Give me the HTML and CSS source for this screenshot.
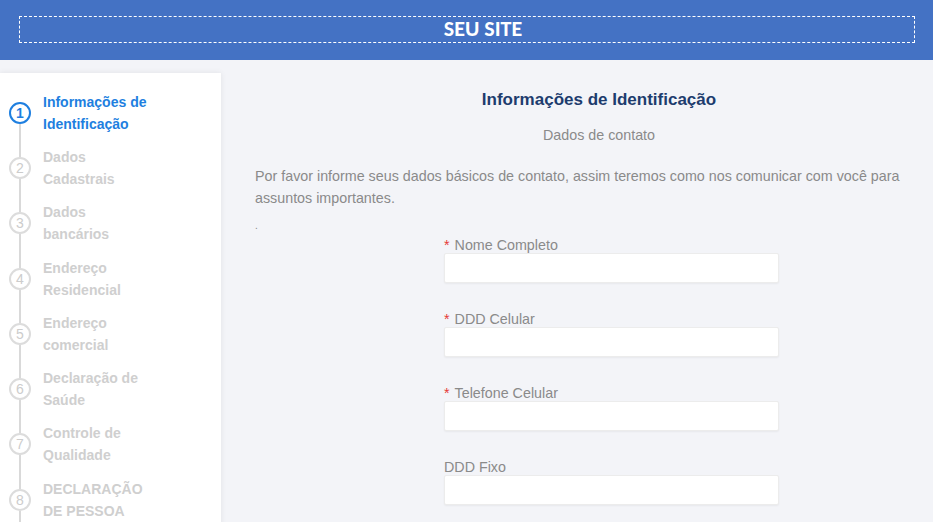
FILE: index.html
```html
<html>

<head>
    <title>Informações de Identificação</title>
    <link rel="stylesheet" href="styles.css">
</head>

<body>
    <div class="topo">
        <div class="topo-caixa">SEU SITE</div>
    </div>

    <div class="pagina">
        <!-- passos do cadastro -->
        <div class="lateral">
            <div class="passo ativo">
                <div class="marcador"><span class="traco oculto"></span><span class="bola">1</span><span class="traco"></span></div>
                <div class="passo-nome">Informações de Identificação</div>
            </div>
            <div class="passo">
                <div class="marcador"><span class="traco"></span><span class="bola">2</span><span class="traco"></span></div>
                <div class="passo-nome">Dados<br>Cadastrais</div>
            </div>
            <div class="passo">
                <div class="marcador"><span class="traco"></span><span class="bola">3</span><span class="traco"></span></div>
                <div class="passo-nome">Dados<br>bancários</div>
            </div>
            <div class="passo">
                <div class="marcador"><span class="traco"></span><span class="bola">4</span><span class="traco"></span></div>
                <div class="passo-nome">Endereço<br>Residencial</div>
            </div>
            <div class="passo">
                <div class="marcador"><span class="traco"></span><span class="bola">5</span><span class="traco"></span></div>
                <div class="passo-nome">Endereço<br>comercial</div>
            </div>
            <div class="passo">
                <div class="marcador"><span class="traco"></span><span class="bola">6</span><span class="traco"></span></div>
                <div class="passo-nome">Declaração de Saúde</div>
            </div>
            <div class="passo">
                <div class="marcador"><span class="traco"></span><span class="bola">7</span><span class="traco"></span></div>
                <div class="passo-nome">Controle de Qualidade</div>
            </div>
            <div class="passo">
                <div class="marcador"><span class="traco"></span><span class="bola">8</span><span class="traco"></span></div>
                <div class="passo-nome">DECLARAÇÃO DE PESSOA</div>
            </div>
        </div>

        <!-- formulario -->
        <div class="conteudo">
            <h1 class="titulo">Informações de Identificação</h1>
            <p class="subtitulo">Dados de contato</p>
            <p class="texto">Por favor informe seus dados básicos de contato, assim teremos como nos comunicar com você para assuntos importantes.</p>
            <p class="ponto">.</p>

            <div class="campos">
                <div class="campo">
                    <label><span class="obrigatorio">*</span>Nome Completo</label>
                    <input type="text">
                </div>
                <div class="campo">
                    <label><span class="obrigatorio">*</span>DDD Celular</label>
                    <input type="text">
                </div>
                <div class="campo">
                    <label><span class="obrigatorio">*</span>Telefone Celular</label>
                    <input type="text">
                </div>
                <div class="campo">
                    <label>DDD Fixo</label>
                    <input type="text">
                </div>
            </div>
        </div>
    </div>
</body>

</html>
```

FILE: styles.css
```css
* {
    box-sizing: border-box;
    margin: 0;
    padding: 0;
}

body {
    background-color: #f3f4f8;
    font-family: 'Liberation Sans', Arial, sans-serif;
    overflow: hidden;
    height: 100vh;
}

/* faixa azul do topo */
.topo {
    background-color: #4472c4;
    height: 60px;
    padding: 16px 18px 17px 19px;
}

.topo-caixa {
    height: 27px;
    border: 1.5px dashed #ffffff;
    padding-left: 32px;
    color: #ffffff;
    text-align: center;
    font-family: 'Carlito', 'Liberation Sans Narrow', 'Open Sans', sans-serif;
    font-size: 22px;
    font-weight: 700;
    line-height: 24px;
}

.pagina {
    display: flex;
    align-items: flex-start;
}

/* passos */
.lateral {
    width: 221px;
    flex-shrink: 0;
    height: 470px;
    margin-top: 13px;
    background: #ffffff;
    box-shadow: 0 0 6px rgba(0, 0, 0, 0.08);
    padding: 12px 0 0 9px;
    overflow: hidden;
}

.passo {
    display: flex;
    gap: 12px;
    height: 55.3px;
}

.marcador {
    width: 22px;
    display: flex;
    flex-direction: column;
    align-items: center;
}

.traco {
    flex: 1;
    width: 2px;
    background: #d9d9d9;
}

.traco.oculto {
    visibility: hidden;
}

.bola {
    width: 22px;
    height: 22px;
    border-radius: 50%;
    border: 2px solid #dcdcdc;
    color: #cccccc;
    font-size: 14px;
    line-height: 18px;
    text-align: center;
}

.passo-nome {
    align-self: center;
    width: 120px;
    color: #cfcfcf;
    font-size: 14px;
    font-weight: 700;
    line-height: 22px;
}

.passo.ativo .bola {
    border-color: #1e7fe0;
    color: #1e7fe0;
    font-weight: 700;
}

.passo.ativo .passo-nome {
    color: #1e7fe0;
}

/* conteudo principal */
.conteudo {
    width: 688px;
    flex-shrink: 0;
    margin-left: 34px;
    padding-top: 30px;
    color: #8a8a8a;
    font-size: 14.3px;
}

.titulo {
    color: #1d3c6e;
    font-size: 17px;
    font-weight: 700;
    line-height: 20px;
    text-align: center;
}

.subtitulo {
    margin-top: 14px;
    line-height: 22px;
    text-align: center;
}

.texto {
    margin-top: 19px;
    line-height: 22px;
}

.ponto {
    margin-top: 6px;
    line-height: 22px;
    font-size: 10px;
}

.campos {
    margin-left: 189px;
    width: 335px;
}

.campo {
    margin-bottom: 28px;
}

.campo label {
    display: block;
    line-height: 16px;
    font-size: 14.3px;
}

.obrigatorio {
    color: #e53935;
    margin-right: 5px;
}

.campo input {
    display: block;
    width: 335px;
    height: 30px;
    background: #ffffff;
    border: 1px solid #ececec;
    border-radius: 2px;
    box-shadow: 0 1px 2px rgba(0, 0, 0, 0.05);
}
```
